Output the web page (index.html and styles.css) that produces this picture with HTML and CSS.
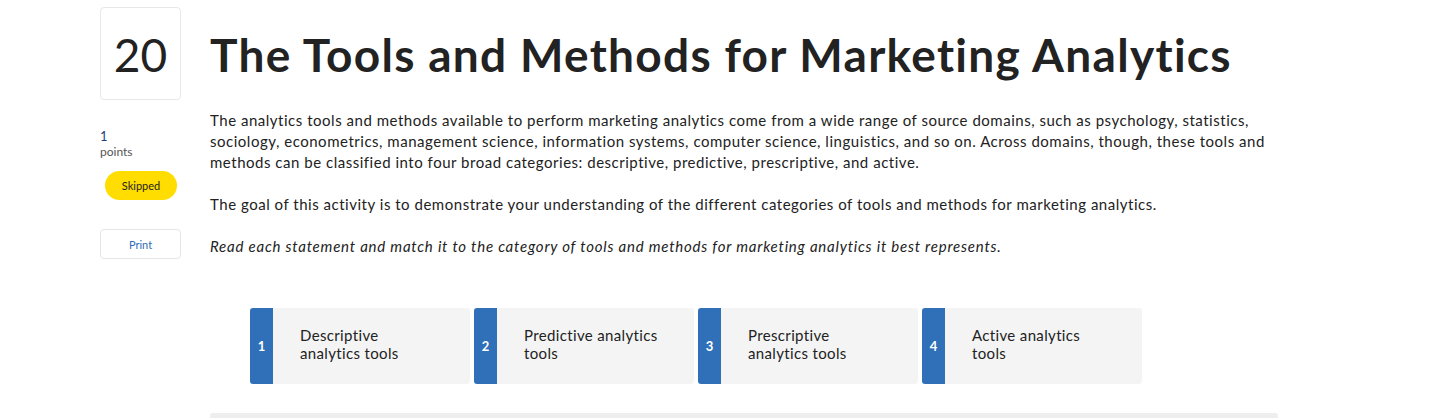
FILE: index.html
```html
<!DOCTYPE html>
<html>
<head>
<meta charset="utf-8">
<link rel="stylesheet" href="styles.css">
</head>
<body>
<div class="page">
  <aside class="side">
    <div class="qnum">20</div>
    <div class="points"><span class="pval">1</span><span class="plabel">points</span></div>
    <div class="status">Skipped</div>
    <button class="print">Print</button>
  </aside>
  <main class="main">
    <h1 class="title">The Tools and Methods for Marketing Analytics</h1>
    <p class="para">The analytics tools and methods available to perform marketing analytics come from a wide range of source domains, such as psychology, statistics,<br>sociology, econometrics, management science, information systems, computer science, linguistics, and so on. Across domains, though, these tools and<br>methods can be classified into four broad categories: descriptive, predictive, prescriptive, and active.</p>
    <p class="para">The goal of this activity is to demonstrate your understanding of the different categories of tools and methods for marketing analytics.</p>
    <p class="para italic">Read each statement and match it to the category of tools and methods for marketing analytics it best represents.</p>
    <div class="cards">
      <div class="card"><div class="badge">1</div><div class="label">Descriptive<br>analytics tools</div></div>
      <div class="card"><div class="badge">2</div><div class="label">Predictive analytics<br>tools</div></div>
      <div class="card"><div class="badge">3</div><div class="label">Prescriptive<br>analytics tools</div></div>
      <div class="card"><div class="badge">4</div><div class="label">Active analytics<br>tools</div></div>
    </div>
    <div class="bottombar"></div>
  </main>
</div>
</body>
</html>
```
FILE: styles.css
```css
* { box-sizing: border-box; }
html, body { margin: 0; padding: 0; background: #fff; }
body { font-family: Lato, "Open Sans", sans-serif; color: #222; overflow: hidden; height: 418px; font-variant-ligatures: none; }
.page { display: flex; padding: 7px 0 0 100px; gap: 29px; }
.side { width: 81px; flex: none; display: flex; flex-direction: column; }
.qnum {
  height: 93px; border: 1px solid #e8e8e8; border-radius: 4px;
  display: flex; align-items: center; justify-content: center;
  font-size: 46px; color: #222; font-weight: 400; padding-top: 2px;
}
.points { display: flex; flex-direction: column; margin-top: 28px; font-size: 12px; line-height: 16px; }
.pval { color: #1f3f7a; font-size: 13px; }
.plabel { color: #555; }
.status {
  margin: 11px 0 0 5px; width: 72px; height: 29px; border-radius: 15px;
  background: #ffdd00; color: #222; font-size: 11px;
  display: flex; align-items: center; justify-content: center;
}
.print {
  margin-top: 29px; height: 30px; width: 81px; border: 1px solid #e5e5e5; border-radius: 4px;
  background: #fff; color: #2f6db8; font-size: 11px; font-family: inherit; padding: 0;
}
.main { flex: none; width: 1068px; }
.title { margin: 22px 0 0; font-size: 46px; line-height: 52px; font-weight: 700; color: #222; letter-spacing: 1.3px; }
.para { margin: 29px 0 0; font-size: 15px; line-height: 21px; color: #222; letter-spacing: 0.52px; }
.para + .para { margin-top: 21px; }
.italic { font-style: italic; letter-spacing: 0.78px; }
.cards { display: flex; gap: 4px; margin: 51px 0 0 40px; }
.card { width: 220px; height: 76px; background: #f4f4f4; border-radius: 3px; display: flex; overflow: hidden; }
.badge {
  width: 23px; flex: none; background: #3070b9; color: #fff; font-weight: 700; font-size: 13px;
  display: flex; align-items: center; justify-content: center;
}
.label { padding: 18px 0 0 27px; font-size: 15px; line-height: 18px; color: #222; letter-spacing: 0.35px; }
.bottombar { margin-top: 29px; height: 6px; background: #eeeeee; border-radius: 3px; }
```
